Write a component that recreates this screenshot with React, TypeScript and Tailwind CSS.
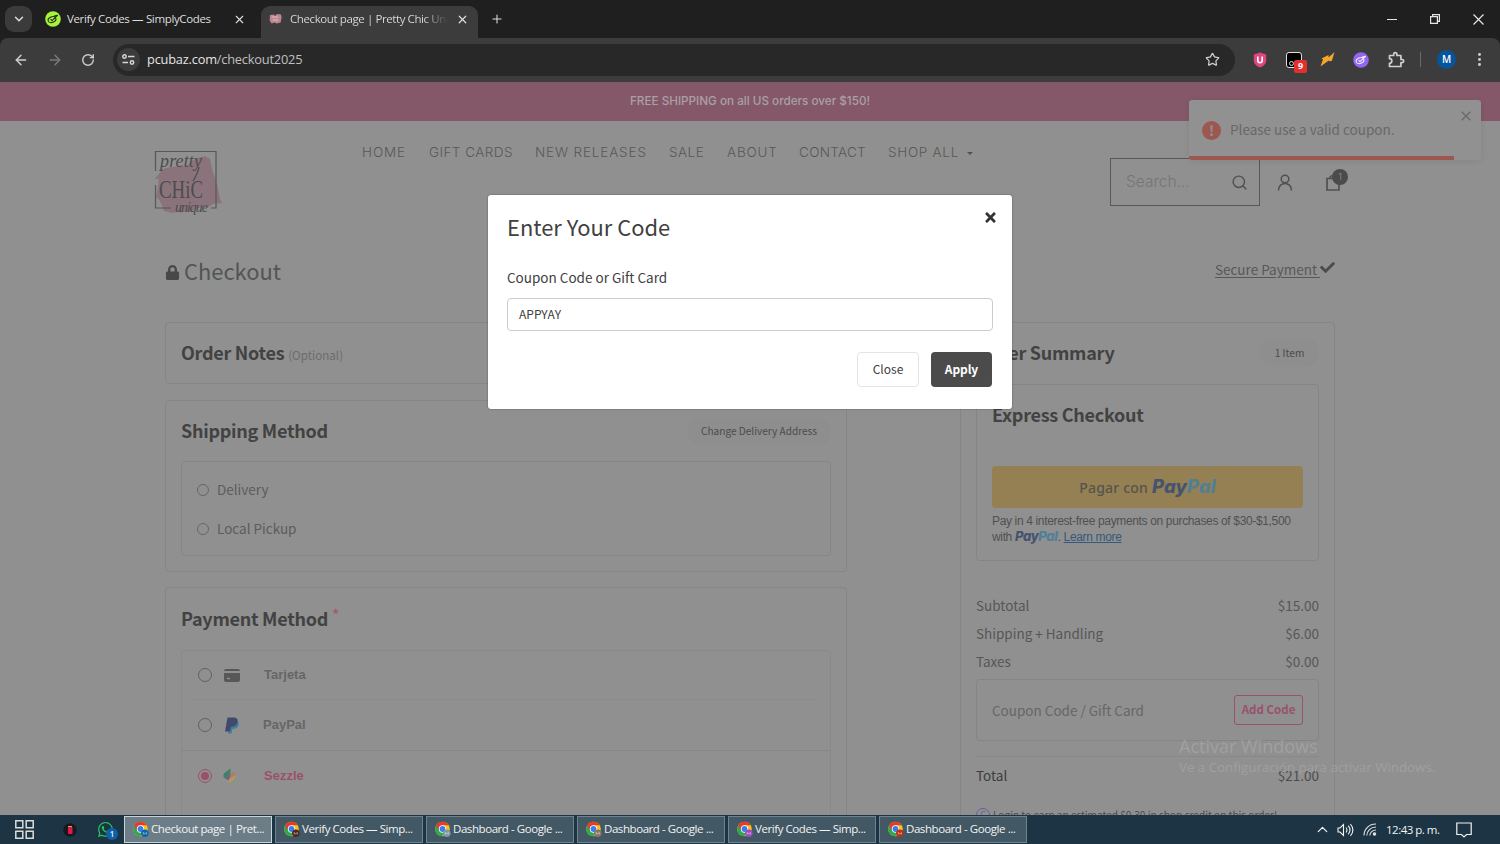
import React from 'react';
import { ArrowLeft, ArrowRight, ChevronDown, ChevronUp, MoreVertical, Plus, RotateCw, Search, Star, X } from 'lucide-react';
import { FaCheck, FaLock, FaTimes, FaWhatsapp } from 'react-icons/fa';

const SANS = "font-['Noto_Sans_CJK_SC',sans-serif]";
const UI = "font-['Open_Sans','Noto_Sans',sans-serif]";
const GEO = "font-['Inter',sans-serif]";

const NAV = [
  { label: 'HOME', cls: 'w-[67px] tracking-[0.9px]' },
  { label: 'GIFT CARDS', cls: 'w-[106px] tracking-[0.45px]' },
  { label: 'NEW RELEASES', cls: 'w-[134px] tracking-[0.85px]' },
  { label: 'SALE', cls: 'w-[58px] tracking-[0.5px]' },
  { label: 'ABOUT', cls: 'w-[72px] tracking-[0.8px]' },
  { label: 'CONTACT', cls: 'w-[89px] tracking-[0.3px]' },
  { label: 'SHOP ALL', cls: 'w-[79px] tracking-[0.7px]' },
];

const TASKS = [
  { label: 'Checkout page | Pret...', active: true, badge: '#0b66a8' },
  { label: 'Verify Codes — Simp...', badge: '#4a2a22' },
  { label: 'Dashboard - Google ...', badge: '#7e98a8' },
  { label: 'Dashboard - Google ...', badge: '#8c7468' },
  { label: 'Verify Codes — Simp...', badge: '#a04cc0' },
  { label: 'Dashboard - Google ...', badge: '#b83218' },
];

const TOTALS = [
  { label: 'Subtotal', value: '$15.00' },
  { label: 'Shipping + Handling', value: '$6.00' },
  { label: 'Taxes', value: '$0.00' },
];

const SimplyIcon = ({ bg, fg }: { bg: string; fg: string }) => (
  <svg width="16" height="16" viewBox="0 0 16 16" fill="none">
    <circle cx="8" cy="8" r="7.8" fill={bg} />
    <g stroke={fg} strokeWidth="1.100" strokeLinejoin="round">
      <ellipse cx="7" cy="8.600" rx="4" ry="2.800" transform="rotate(-22 7 8.600)" />
      <path d="M5.500 8.200 7 9.600l5.500-5.300-3.500.7" />
    </g>
  </svg>
);

const ChromeIcon = ({ badge }: { badge: string }) => (
  <svg width="17" height="17" viewBox="0 0 17 17" className="shrink-0">
    <circle cx="7.500" cy="8" r="7.300" fill="#fbc116" />
    <path d="M8 8 1.100 4.400A7.300 7.300 0 0 0 7.200 15.300L11 10z" fill="#2da94f" />
    <path d="M1.100 4.400 4.200 9.800 7.500 4.300h6.300A7.300 7.300 0 0 0 1.100 4.400z" fill="#e33b2e" />
    <circle cx="7.500" cy="8" r="3.700" fill="#fff" />
    <circle cx="7.500" cy="8" r="2.900" fill="#3b7ded" />
    <circle cx="11.800" cy="12.300" r="3.800" fill={badge} />
    <path d="M10.200 13.500v-2l1.600 1.400 1.600-1.400v2" fill="none" stroke="#ffffff90" strokeWidth=".8" />
  </svg>
);

const PayPalWord = ({ className }: { className: string }) => (
  <span className={`font-extrabold italic ${GEO} ${className}`}>
    <span className="text-[#46536f]">Pay</span><span className="text-[#527f95]">Pal</span>
  </span>
);

const BrowserBar = () => (
  <div className={`h-[82px] bg-[#1f1f1f] ${UI}`}>
    <div className="flex h-[38px] items-end text-[11.500px] text-[#dedede]">
      <div className="mb-[6px] ml-[5px] flex h-[26px] w-[27px] items-center justify-center rounded-[9px] bg-[#3b3b3b]">
        <ChevronDown className="h-[14px] w-[14px]" strokeWidth={2.500} />
      </div>
      <div className="ml-[13px] flex h-[38px] w-[216px] items-center">
        <SimplyIcon bg="#a5f33c" fg="#1c2a10" />
        <span className="ml-[6px] w-[166px] whitespace-nowrap tracking-[-0.35px]">Verify Codes — SimplyCodes</span>
        <X className="h-[13px] w-[13px]" strokeWidth={2} />
      </div>
      <div className="flex h-[32px] w-[217px] items-center rounded-t-[9px] bg-[#3c3c3c] pb-[6px] pl-[8px]">
        <svg width="13" height="12" viewBox="0 0 13 12">
          <path d="M1 2 5 1.500 6 3l2-2 4 .5.600 3-1 5-4 1-2-1-3 1-2-3z" fill="#bd8791" />
          <path d="M3 4h6M4 7h5" stroke="#f0c5cd" strokeWidth=".8" />
        </svg>
        <span className="ml-[8px] w-[158px] overflow-hidden bg-gradient-to-r from-[#dedede] from-85% to-[#3c3c3c] bg-clip-text whitespace-nowrap text-transparent tracking-[-0.4px]">
          Checkout page | Pretty Chic Uni
        </span>
        <X className="ml-[8px] h-[13px] w-[13px]" strokeWidth={2.200} />
      </div>
      <div className="ml-[12px] flex h-[38px] items-center"><Plus className="h-[14px] w-[14px]" strokeWidth={1.800} /></div>
      <div className="ml-auto flex h-[38px] items-center gap-[33px] pr-[16px] text-[#e6e6e6]">
        <span className="h-px w-[10px] bg-[#e6e6e6]" />
        <svg width="10" height="10" viewBox="0 0 10 10" fill="none" stroke="currentColor" strokeWidth="1.200">
          <path d="M.6 2.600h6.800v6.800H.6zM2.600 2.500V.6h6.800v6.800H7.500" />
        </svg>
        <svg width="11" height="11" viewBox="0 0 11 11" stroke="currentColor" strokeWidth="1.200"><path d="m.5.5 10 10M10.500.5l-10 10" /></svg>
      </div>
    </div>
    <div className="flex h-[44px] items-center rounded-t-[8px] bg-[#3c3c3c] pb-[1px] text-[#cfcfcf]">
      <ArrowLeft className="ml-[13px] h-[16px] w-[16px]" strokeWidth={2.200} />
      <ArrowRight className="ml-[18px] h-[16px] w-[16px] text-[#7a7a7a]" strokeWidth={2.200} />
      <RotateCw className="ml-[18px] h-[14px] w-[14px]" strokeWidth={2.400} />
      <div className="ml-[18px] flex h-[32px] w-[1122px] items-center rounded-full bg-[#282828] pl-[4px]">
        <div className="flex h-[23px] w-[23px] items-center justify-center rounded-full bg-[#3c3c3c]">
          <svg width="13" height="11" viewBox="0 0 13 11" fill="none" stroke="#d6d6d6" strokeWidth="1.500">
            <circle cx="2.500" cy="2.500" r="1.700" /><path d="M6 2.500h6.500M.5 8.500H6" /><circle cx="10" cy="8.500" r="1.700" />
          </svg>
        </div>
        <span className="ml-[7px] text-[12.800px] tracking-[-0.2px] text-[#e4e4e4]">pcubaz.com<span className="text-[#c0c0c0]">/checkout2025</span></span>
        <Star className="mr-[15px] ml-auto h-[15px] w-[15px]" strokeWidth={2} />
      </div>
      <svg className="ml-[18px]" width="14" height="16" viewBox="0 0 14 16">
        <path d="M7 .5 13.200 2.500v6c0 3.500-3 5.800-6.200 7-3.200-1.200-6.200-3.500-6.200-7v-6z" fill="#e0457f" />
        <path d="M4.800 4.500v4a2.200 2.200 0 0 0 4.400 0v-4" fill="none" stroke="#fff" strokeWidth="1.600" />
      </svg>
      <div className="relative ml-[19px] h-[16px] w-[16px] rounded-[3px] border border-[#e0e0e0] bg-black">
        <span className="absolute bottom-[1px] left-[2px] h-[5px] w-[5px] rounded-full border border-[#d8d8d8]" />
        <span className="absolute top-[7px] left-[7px] flex h-[13px] w-[13px] items-center justify-center rounded-[2px] bg-[#e3302c] text-[9px] font-bold text-white">9</span>
      </div>
      <svg className="ml-[17px]" width="17" height="17" viewBox="0 0 17 17"><path d="M1.500 15.500 4 8.500 2.500 7.500 9.500 4v2.500L15.500 1 13 9.500l-2 1-1.200-1z" fill="#f5a62c" /></svg>
      <div className="ml-[17px]"><SimplyIcon bg="#9366f2" fg="#f2ecff" /></div>
      <svg className="ml-[18px]" width="18" height="18" viewBox="0 0 18 18" fill="none" stroke="#cfcfcf" strokeWidth="1.700" strokeLinejoin="round">
        <path d="M2.500 4.500h4.200V3.200a1.600 1.600 0 0 1 3.200 0v1.300h4v4h1.200a1.600 1.600 0 0 1 0 3.200h-1.200v3.800H2.500v-3.200a2.300 2.300 0 0 0 0-4.600z" />
      </svg>
      <span className="ml-[15px] h-[15px] w-px bg-[#6a6a6a]" />
      <span className="ml-[16px] flex h-[19px] w-[19px] items-center justify-center rounded-full bg-[#05559c] text-[10px] font-semibold text-white">M</span>
      <MoreVertical className="ml-[15px] h-[17px] w-[17px]" strokeWidth={2.200} />
    </div>
  </div>
);

const Logo = () => (
  <svg width="72" height="70" viewBox="0 0 72 70" className="ml-[152px]">
    <path d="M3 34C8 28 9 24 14 23l22-3c4-6 12-8 17-9l5 3 3 14c3 6 5 14 7 26l2 4-9 1c-4 4-9 4-15 4-6 4-16 5-21 4l-5 1-8-2c-2-6-4-12-8-14 2-8 2-12 3-18z" fill="#8a6c75" opacity=".8" />
    <path d="M3.500 26V6.500H64V63h-5M19 63H3.500V40" fill="none" stroke="#57575b" strokeWidth="1.200" />
    <g fill="#4c4c50" fontFamily="Liberation Serif" fontStyle="italic">
      <text x="8" y="22" fontSize="18" textLength="42">pretty</text>
      <text x="7" y="53" fontSize="25" fontStyle="normal" textLength="44" lengthAdjust="spacingAndGlyphs">CHiC</text>
      <text x="23" y="67" fontSize="14" textLength="33">unique</text>
    </g>
    <path d="M47 22c-1 6-3 9-6 14" stroke="#4c4c50" strokeWidth="1.300" fill="none" />
  </svg>
);

const Header = () => (
  <div className="flex h-[138px] items-start">
    <div className="mt-[24px]"><Logo /></div>
    <nav className={`mt-[21px] ml-[138px] flex h-[20px] items-center text-[13.500px] font-light text-[#585858] ${GEO}`}>
      {NAV.map(n => <span key={n.label} className={`whitespace-nowrap ${n.cls}`}>{n.label}</span>)}
      <span className="mt-[2px] border-x-[3.500px] border-t-[3.500px] border-x-transparent border-t-[#505050]" />
    </nav>
    <div className="mt-[37px] ml-[137px] flex h-[48px] w-[150px] items-center justify-between border border-[#585858] pr-[11px] pl-[15px]">
      <span className={`text-[15.500px] font-light text-[#757575] ${GEO}`}>Search...</span>
      <Search className="mt-[1px] h-[17px] w-[17px] text-[#505050]" strokeWidth={2} />
    </div>
    <svg className="mt-[53px] ml-[17px]" width="16" height="17" viewBox="0 0 16 17" fill="none" stroke="#505050" strokeWidth="1.500">
      <circle cx="8" cy="5" r="3.800" /><path d="M1.500 16.500c0-9.500 13-9.500 13 0" />
    </svg>
    <div className="relative mt-[53px] ml-[32px]">
      <svg width="16" height="17" viewBox="0 0 16 17" fill="none" stroke="#505050" strokeWidth="1.700">
        <path d="M2 4.500h12v11.500H2zM5 4c0-3 6-3 6 0" />
      </svg>
      <span className={`absolute -top-[5px] left-[7px] flex h-[16px] w-[16px] items-center justify-center rounded-full bg-[#4b4b4b] text-[9px] text-[#858585] ${GEO}`}>1</span>
    </div>
  </div>
);

const CardTitle = ({ children }: { children: React.ReactNode }) => (
  <h2 className="text-[18px] leading-[30px] font-bold tracking-[-0.270px] whitespace-nowrap text-[#424242]">{children}</h2>
);

const Radio = ({ on }: { on?: boolean }) => (
  <span className={`flex h-[14px] w-[14px] items-center justify-center rounded-full border-[1.500px] ${on ? 'border-[#99516c]' : 'border-[#606060]'}`}>
    {on && <span className="h-[8px] w-[8px] rounded-full bg-[#99516c]" />}
  </span>
);

const LeftColumn = () => (
  <div className="w-[682px]">
    <div className="flex h-[62px] items-center rounded-[4px] border border-[#858585] px-[15px]">
      <CardTitle>Order Notes <span className="text-[11.600px] font-normal tracking-normal text-[#6c6c6c]">(Optional)</span></CardTitle>
    </div>
    <div className="mt-[16px] h-[172px] rounded-[4px] border border-[#858585] px-[15px] pt-[14px]">
      <div className="flex items-center justify-between">
        <CardTitle>Shipping Method</CardTitle>
        <span className="mt-[1px] flex h-[28px] w-[144px] items-center justify-center rounded-full bg-[#8e8e8e] text-[10.100px] whitespace-nowrap text-[#4c4c4c]">Change Delivery Address</span>
      </div>
      <div className="mt-[16px] h-[95px] rounded-[4px] border border-[#858585] pt-[8px] pl-[15px] text-[13.500px] text-[#5c5c5c]">
        {['Delivery', 'Local Pickup'].map(o => (
          <div key={o} className="flex h-[39px] items-center gap-[8px]">
            <span className="mt-px h-[12px] w-[12px] rounded-full border border-[#666]" />
            <span>{o}</span>
          </div>
        ))}
      </div>
    </div>
    <div className="mt-[15px] h-[300px] rounded-[4px] border border-[#858585] px-[15px] pt-[15px]">
      <CardTitle>Payment Method <sup className="-top-[4px] text-[17px] font-normal text-[#a05a70]">*</sup></CardTitle>
      <div className="mt-[17px] h-[240px] rounded-[4px] border border-[#898989] font-['Liberation_Sans',sans-serif] text-[13px] font-bold text-[#666]">
        <div className="mx-[10px] flex h-[49px] items-center border-b border-[#8c8c8c] pl-[6px]">
          <Radio />
          <svg className="ml-[12px]" width="16" height="13" viewBox="0 0 16 13" fill="#585858">
            <path d="M2 0h12a2 2 0 0 1 2 2H0a2 2 0 0 1 2-2zM0 4h16v7a2 2 0 0 1-2 2H2a2 2 0 0 1-2-2z" /><path d="M3 9.500h3" stroke="#909090" strokeWidth="1.400" />
          </svg>
          <span className="ml-[24px]">Tarjeta</span>
        </div>
        <div className="flex h-[51px] items-center border-b border-[#878787] pl-[16px]">
          <Radio />
          <svg className="ml-[13px]" width="14" height="17" viewBox="0 0 14 17">
            <path d="M4 5h9.500c1 5-2 7-6 7l-1 4.500H3z" fill="#3f7f9e" />
            <path d="M2.500.5h6c4 0 5 2.500 3.800 5.500-1 2.800-3 3.700-6.300 3.700L5 14.500H0z" fill="#414a6c" />
          </svg>
          <span className="ml-[24px]">PayPal</span>
        </div>
        <div className="flex h-[50px] items-center pl-[16px] text-[#99516c]">
          <Radio on />
          <svg className="ml-[11px]" width="13" height="16" viewBox="0 0 13 16">
            <path d="M7.500.5v5L3.500 9.500l-1 1.200C-.3 9 0 6.500 1.500 5z" fill="#3f8068" />
            <path d="M2.500 10.700 7.500 5.500v4L5.500 12z" fill="#74588a" />
            <path d="M6 11 7.500 7l2.800-3.500c2.500 1.500 3 4 1.500 6L9 12z" fill="#b07a66" />
            <path d="M6 15.500v-4l6-4.500c.5 1.500.2 3-1 4.200z" fill="#b09a55" />
          </svg>
          <span className="ml-[28px]">Sezzle</span>
        </div>
      </div>
    </div>
  </div>
);

const Summary = () => (
  <div className="h-[560px] w-[375px] rounded-[4px] border border-[#858585] px-[15px] pt-[14px]">
    <div className="flex items-center justify-between">
      <CardTitle>Order Summary</CardTitle>
      <span className="mt-px flex h-[28px] w-[59px] items-center justify-center rounded-full bg-[#8e8e8e] text-[10.200px] text-[#4c4c4c]">1 Item</span>
    </div>
    <div className="mt-[17px] h-[177px] rounded-[4px] border border-[#858585] px-[15px] pt-[14px]">
      <CardTitle>Express Checkout</CardTitle>
      <div className="mt-[37px] flex h-[42px] items-center justify-center rounded-[4px] bg-[#948053]">
        <span className="font-['Noto_Sans',sans-serif] text-[14px] font-medium tracking-[0.200px] text-[#55544c]">Pagar con</span>
        <PayPalWord className="ml-[4px] text-[18.500px]" />
      </div>
      <div className="mt-[6px] font-['Liberation_Sans',sans-serif] text-[12px] leading-[15px] tracking-[-0.350px] whitespace-nowrap text-[#505050]">
        Pay in 4 interest-free payments on purchases of $30-$1,500<br />
        with <PayPalWord className="text-[13px]" />. <span className="text-[#35597a] underline">Learn more</span>
      </div>
    </div>
    <div className="mt-[30px] text-[13.500px] text-[#565656]">
      {TOTALS.map(t => (
        <div key={t.label} className="flex h-[28px] items-center justify-between">
          <span>{t.label}</span><span>{t.value}</span>
        </div>
      ))}
    </div>
    <div className="mt-[4px] flex h-[62px] items-center justify-between rounded-[4px] border border-[#858585] px-[15px] text-[13.500px] text-[#666]">
      Coupon Code / Gift Card
      <span className="flex h-[30px] w-[69px] items-center justify-center rounded-[3px] border border-[#99516c] text-[11.500px] font-bold whitespace-nowrap text-[#99516c]">Add Code</span>
    </div>
    <div className="mt-[15px] flex h-[37px] items-center justify-between border-t border-[#888] text-[13.500px] text-[#3c3c3c]">
      <span>Total</span><span className="text-[#4c4c4c]">$21.00</span>
    </div>
    <div className="mt-[14px] flex items-center gap-[3px] text-[10.100px] leading-[16px] whitespace-nowrap text-[#4a4a4a]">
      <span className="flex h-[14px] w-[14px] items-center justify-center rounded-full border border-[#62609a] text-[9px] text-[#62609a]">C</span>
      Login to earn an estimated $0.30 in shop credit on this order!
    </div>
  </div>
);

const Toast = () => (
  <div className="absolute top-[100px] left-[1189px] h-[60px] w-[292px] rounded-[3px] bg-[#919191] shadow-[0_1px_6px_rgba(0,0,0,0.08)]">
    <div className="flex h-[60px] items-center gap-[9px] pb-px pl-[13px] text-[13.500px] text-[#686868]">
      <span className="mt-px flex h-[19px] w-[19px] items-center justify-center rounded-full bg-[#9c5850] text-[14px] font-bold text-[#929292]">!</span>
      Please use a valid coupon.
    </div>
    <svg className="absolute top-[11px] right-[10px]" width="10" height="10" viewBox="0 0 10 10" stroke="#6c6c6c" strokeWidth="1.500"><path d="m.7.7 8.600 8.600M9.300.7.7 9.300" /></svg>
    <div className="absolute bottom-0 left-0 h-[4px] w-[265px] rounded-bl-[3px] bg-[#9c5850]" />
  </div>
);

const CodeModal = () => (
  <div className="absolute top-[195px] left-[488px] h-[214px] w-[524px] rounded-[3px] bg-white px-[19px] pt-[14px] text-[#404040] shadow-[0_0_2px_rgba(0,0,0,0.4)]">
    <div className="flex items-start justify-between">
      <h1 className="text-[21.900px] leading-[36px] whitespace-nowrap">Enter Your Code</h1>
      <FaTimes className="mt-[1px] -mr-[5px] h-[15px] w-[15px] text-[#333]" />
    </div>
    <div className="mt-[22px] text-[13.500px] leading-[20px]">Coupon Code or Gift Card</div>
    <div className="mt-[11px] flex h-[33px] items-center rounded-[4px] border border-[#ccc] pb-[1px] pl-[11px] text-[12px]">APPYAY</div>
    <div className="mt-[21px] flex justify-end gap-[12px] pr-px text-[12px]">
      <button className="h-[35px] w-[62px] rounded-[4px] border border-[#e4e4e4] pb-px">Close</button>
      <button className="h-[35px] w-[61px] rounded-[4px] bg-[#4b4b4b] pb-px font-bold tracking-[-0.1px] text-white">Apply</button>
    </div>
  </div>
);

const Taskbar = () => (
  <div className={`absolute inset-x-0 bottom-0 flex h-[29px] items-center bg-[#1c3444] text-[11.500px] text-[#f2f2f2] ${UI}`}>
    <svg className="ml-[15px]" width="19" height="19" viewBox="0 0 19 19" fill="none" stroke="#dcdcdc" strokeWidth="1.500">
      <path d="M.8.8h7v7h-7zM11.200.8h7v7h-7zM.8 11.200h7v7h-7zM11.200 11.200h7v7h-7z" />
    </svg>
    <svg className="ml-[29px]" width="14" height="14" viewBox="0 0 14 14">
      <circle cx="7" cy="7" r="6.800" fill="#161a20" /><rect x="5" y="4" width="4.500" height="7" rx="1" fill="#e0184e" /><path d="M5 3.500h4" stroke="#f0a030" />
    </svg>
    <div className="relative ml-[20px]">
      <FaWhatsapp className="h-[17px] w-[17px] text-[#27c45a]" />
      <span className="absolute top-[7px] left-[9px] flex h-[12px] w-[12px] items-center justify-center rounded-full bg-[#0c61a8] text-[8px] font-semibold">1</span>
    </div>
    <div className="ml-[10px] flex gap-[3px]">
      {TASKS.map((t, i) => (
        <div key={i} className={`flex h-[27px] w-[148px] items-center border pl-[8px] ${t.active ? 'border-[#c9d3d8] bg-[#6d7d87]' : 'border-[#6f838e] bg-[#435865]'}`}>
          <ChromeIcon badge={t.badge} />
          <span className="ml-[1px] pb-px tracking-[-0.430px] whitespace-nowrap">{t.label}</span>
        </div>
      ))}
    </div>
    <ChevronUp className="ml-auto h-[17px] w-[17px]" strokeWidth={1.800} />
    <svg className="ml-[6px]" width="17" height="14" viewBox="0 0 17 14" fill="none" stroke="#f2f2f2" strokeWidth="1.100">
      <path d="M1 5h2l3.500-3.500v11L3 9H1zM9 4.500q2 2.500 0 5M11.200 2.700q3.600 4.300 0 8.600M13.400 1q5 6 0 12" />
    </svg>
    <svg className="ml-[9px]" width="14" height="13" viewBox="0 0 14 13" fill="none" stroke="#e0e0e0" strokeWidth="1.100">
      <path d="M1 12.500C1 6 6 1 13 1M3.800 12.500C4 8 7.500 4 13 4M6.800 12.500C7 9.500 9.500 7 13 7" /><circle cx="11.500" cy="11" r="1.200" fill="#e0e0e0" />
    </svg>
    <span className="ml-[9px] w-[54px] tracking-[-0.500px] whitespace-nowrap">12:43 p. m.</span>
    <svg className="mr-[28px] ml-[16px]" width="16" height="16" viewBox="0 0 16 16" fill="none" stroke="#f2f2f2" strokeWidth="1.200">
      <path d="M.8 1h14.400v11.500H10.500L8 15l-2.500-2.500H.8z" />
    </svg>
  </div>
);

export default function App() {
  return (
    <div className={`relative h-[844px] w-[1500px] overflow-hidden bg-[#909090] ${SANS}`}>
      <BrowserBar />
      <div className={`flex h-[39px] items-center justify-center bg-[#845868] text-[11.700px] font-medium text-[#aaa0a4] ${GEO}`}>
        FREE SHIPPING on all US orders over $150!
      </div>
      <Header />
      <div className="flex h-[63px] justify-between pr-[165px] pl-[165px]">
        <div className="-mt-[3px] flex h-[30px] items-center gap-[4px] text-[21.900px] text-[#545454]">
          <FaLock className="mt-[3px] h-[15px] w-[15px] text-[#484848]" />
          Checkout
        </div>
        <div className="flex h-[20px] items-center text-[13.500px] text-[#585858]">
          <span className="whitespace-pre underline underline-offset-2">Secure Payment </span>
          <FaCheck className="mb-[3px] h-[15px] w-[15px] text-[#4c4c4c]" />
        </div>
      </div>
      <div className="flex items-start justify-between px-[165px]">
        <LeftColumn />
        <Summary />
      </div>
      <Toast />
      <CodeModal />
      <div className={`absolute top-[734px] left-[1179px] text-[#a0a0a0] ${UI}`}>
        <div className="text-[18px] leading-[24px]">Activar Windows</div>
        <div className="text-[13.300px] leading-[19px] whitespace-nowrap">Ve a Configuración para activar Windows.</div>
      </div>
      <Taskbar />
    </div>
  );
}
